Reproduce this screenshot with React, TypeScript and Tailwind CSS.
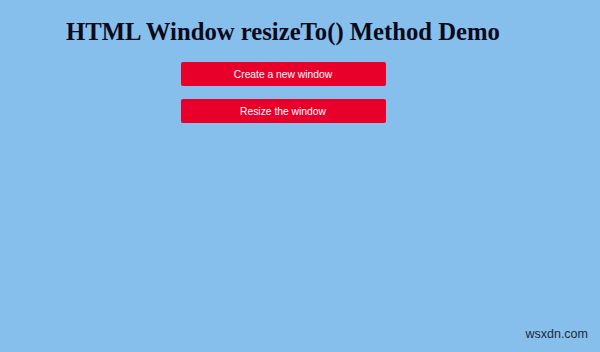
export default function App() {
  return (
    <div className="relative h-[352px] w-[600px] overflow-hidden bg-[#87bfec]">
      <div className="flex w-[566px] flex-col items-center pt-[17px]">
        <h1 className="text-[24.7px] font-bold leading-[30px] text-[#0a0a1a] [font-family:'Liberation_Serif',serif]">
          HTML Window resizeTo() Method Demo
        </h1>
        <div className="mt-[15px] flex flex-col gap-[13px]">
          <button
            type="button"
            className="h-[24px] w-[205px] rounded-[2px] bg-[#e8002b] pt-[1px] text-[10.3px] text-white [font-family:'Liberation_Sans',sans-serif]"
          >
            Create a new window
          </button>
          <button
            type="button"
            className="h-[24px] w-[205px] rounded-[2px] bg-[#e8002b] pt-[1px] text-[10.3px] text-white [font-family:'Liberation_Sans',sans-serif]"
          >
            Resize the window
          </button>
        </div>
      </div>
      <span className="absolute right-[12px] bottom-[8px] text-[12.5px] text-[#1a2a3a] [font-family:'Liberation_Sans',sans-serif]">
        wsxdn.com
      </span>
    </div>
  )
}
